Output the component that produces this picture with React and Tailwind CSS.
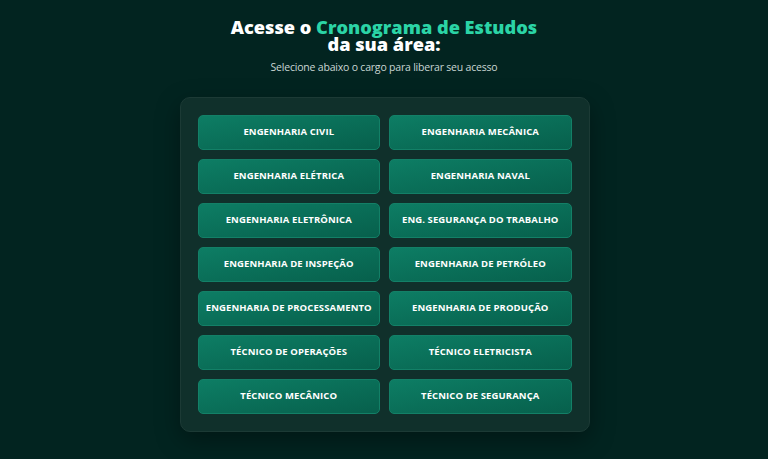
const cargos = [
  "Engenharia Civil",
  "Engenharia Mecânica",
  "Engenharia Elétrica",
  "Engenharia Naval",
  "Engenharia Eletrônica",
  "Eng. Segurança do Trabalho",
  "Engenharia de Inspeção",
  "Engenharia de Petróleo",
  "Engenharia de Processamento",
  "Engenharia de Produção",
  "Técnico de Operações",
  "Técnico Eletricista",
  "Técnico Mecânico",
  "Técnico de Segurança",
];

export default function App() {
  return (
    <div
      className="h-[459px] w-full overflow-hidden bg-[#022420] flex flex-col items-center pt-[19px]"
      style={{ fontFamily: '"Open Sans", "Liberation Sans", sans-serif' }}
    >
      <h1 className="text-center text-[18.2px] font-extrabold leading-[17px] text-white">
        <div>
          Acesse o <span className="text-[#2bd4a6]">Cronograma de Estudos</span>
        </div>
        <div>da sua área:</div>
      </h1>
      <p className="mt-[7px] text-[10.5px] leading-[14px] text-[#c9d6d3] tracking-[-0.2px]">
        Selecione abaixo o cargo para liberar seu acesso
      </p>

      <div className="ml-[1px] mt-[23px] w-[410px] rounded-[10px] border border-[#1c3a35] bg-[#10302b] p-[17px] shadow-[0_8px_24px_rgba(0,0,0,0.35)]">
        <div className="grid grid-cols-2 gap-x-[9px] gap-y-[9px]">
          {cargos.map((c) => (
            <button
              key={c}
              className="h-[35px] rounded-[5px] border border-[#138067] bg-gradient-to-br from-[#0d7d64] to-[#07604c] text-[9.5px] font-bold uppercase tracking-[0.1px] text-white"
            >
              {c}
            </button>
          ))}
        </div>
      </div>
    </div>
  );
}
